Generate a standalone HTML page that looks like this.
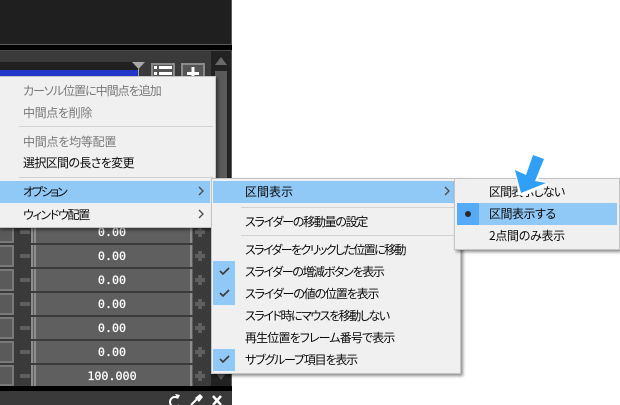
<!DOCTYPE html>
<html lang="ja"><head><meta charset="utf-8"><style>
html,body{margin:0;padding:0;width:620px;height:405px;overflow:hidden;background:#fff}
body{position:relative;font-family:"Liberation Sans","Noto Sans CJK JP",sans-serif}
div{position:absolute;box-sizing:border-box}
.t{font-family:"Noto Sans CJK JP",sans-serif;font-size:12px;line-height:18px;height:18px;margin-top:1px;white-space:nowrap;color:#0a0a0a;font-feature-settings:"palt"}
.g{color:#787878}
.sep{height:1px;background:#d2d2d2}
.hl{background:#90c8f6}
.menu{background:#f0f0f0;border:1px solid #c4c4c4;box-shadow:2px 2px 3px rgba(0,0,0,.45)}
.row{left:31px;width:162px;height:22px;background:#5f5f5f}
.row i{position:absolute;top:0;height:22px;width:1.5px;background:#8e8e8e}
.v{left:31px;width:162px;text-align:center;color:#fff;font:11.7px/23px "DejaVu Sans Mono",monospace;height:22px;-webkit-text-stroke:.25px #fff}
.box{left:-6px;width:20px;height:22px;background:#5a5a5a;border:2px solid #7a7a7a}
.m{left:20px;width:10px;height:4px;background:#5f5f5f;border-radius:1px}
.p1{left:195px;width:10px;height:4px;background:#5f5f5f}
.p2{left:198px;width:4px;height:10px;background:#5f5f5f}
</style></head><body>
<div style="left:0;top:0;width:232px;height:405px;background:#3a3a3a"></div>
<div style="left:0;top:0;width:231px;height:44px;background:#1f1f1f"></div>
<div style="left:231px;top:0;width:1px;height:405px;background:#5a5a5a"></div>
<div style="left:0;top:44px;width:232px;height:1px;background:#5c5c5c"></div>
<div style="left:0;top:45px;width:232px;height:5px;background:#000"></div>
<div style="left:0;top:50px;width:232px;height:1px;background:#4a4a4a"></div>
<div style="left:0;top:62px;width:138px;height:8px;background:#202020"></div>
<div style="left:0;top:70px;width:138px;height:8px;background:#2335c8"></div>
<div style="left:211px;top:51px;width:20px;height:335px;background:#222"></div>
<div style="left:215px;top:71px;width:12px;height:300px;background:#5a5a5a"></div>
<svg style="position:absolute;left:0;top:0" width="232" height="405">
<polygon points="132,62 145,62 138.5,69" fill="#a8a8a8"/>
<rect x="138" y="69" width="1" height="8" fill="#a8a8a8"/>
<polygon points="215,65 227,65 221,57" fill="#6a6a6a"/>
<polygon points="215,372 227,372 221,380" fill="#555"/>
<rect x="152" y="64" width="22" height="16" fill="#555" stroke="#8a8a8a" stroke-width="2"/>
<rect x="182" y="64" width="22" height="16" fill="#555" stroke="#8a8a8a" stroke-width="2"/>
<rect x="154" y="66" width="3" height="3" fill="#fff"/><rect x="159" y="66" width="13" height="3" fill="#fff"/>
<rect x="154" y="72" width="3" height="3" fill="#fff"/><rect x="159" y="72" width="13" height="3" fill="#fff"/>
<rect x="187" y="72" width="12" height="3" fill="#fff"/><rect x="191.500" y="67" width="3" height="10" fill="#fff"/>
</svg>
<div class="box" style="top:221px"></div><div class="box" style="top:245px"></div><div class="box" style="top:269px"></div><div class="box" style="top:293px"></div><div class="box" style="top:317px"></div><div class="box" style="top:341px"></div><div class="box" style="top:365px;height:21px"></div>
<div class="row" style="top:221px"><i style="left:0"></i><i style="left:3px"></i><i style="left:159px"></i></div>
<div class="row" style="top:245px"><i style="left:0"></i><i style="left:3px"></i><i style="left:159px"></i></div>
<div class="row" style="top:269px"><i style="left:0"></i><i style="left:3px"></i><i style="left:159px"></i></div>
<div class="row" style="top:293px"><i style="left:0"></i><i style="left:3px"></i><i style="left:159px"></i></div>
<div class="row" style="top:317px"><i style="left:0"></i><i style="left:3px"></i><i style="left:159px"></i></div>
<div class="row" style="top:341px"><i style="left:0"></i><i style="left:3px"></i><i style="left:159px"></i></div>
<div class="row" style="top:365px;height:21px"><i style="left:0"></i><i style="left:3px"></i><i style="left:159px"></i></div>
<div class="v" style="top:221px">0.00</div><div class="v" style="top:245px">0.00</div><div class="v" style="top:269px">0.00</div><div class="v" style="top:293px">0.00</div><div class="v" style="top:317px">0.00</div><div class="v" style="top:341px">0.00</div><div class="v" style="top:365px">100.000</div>
<div class="m" style="top:230px"></div><div class="m" style="top:254px"></div><div class="m" style="top:278px"></div><div class="m" style="top:302px"></div><div class="m" style="top:326px"></div><div class="m" style="top:350px"></div><div class="m" style="top:374px"></div>
<div class="p1" style="top:230px"></div><div class="p2" style="top:227px"></div>
<div class="p1" style="top:254px"></div><div class="p2" style="top:251px"></div>
<div class="p1" style="top:278px"></div><div class="p2" style="top:275px"></div>
<div class="p1" style="top:302px"></div><div class="p2" style="top:299px"></div>
<div class="p1" style="top:326px"></div><div class="p2" style="top:323px"></div>
<div class="p1" style="top:350px"></div><div class="p2" style="top:347px"></div>
<div class="p1" style="top:374px"></div><div class="p2" style="top:371px"></div>
<div style="left:0;top:391px;width:232px;height:14px;background:#3a3a3a"></div>
<div style="left:0;top:386px;width:232px;height:5px;background:#000"></div>
<svg style="position:absolute;left:0;top:0" width="232" height="405">
<path d="M178 398 A5 5 0 1 0 179 405" fill="none" stroke="#fff" stroke-width="2"/>
<path d="M175 394 l5 1 -2 4z" fill="#fff"/>
<path d="M191 405 L198 398" stroke="#fff" stroke-width="2"/>
<path d="M195 398 l5 -4 3 3 -4 5z" fill="#fff"/>
<path d="M213 396 L221 405 M221 396 L213 405" stroke="#fff" stroke-width="2.500"/>
</svg>

<!-- menu 1 -->
<div class="menu" style="left:-2px;top:76px;width:218px;height:152px"></div>
<div class="t g" style="left:23px;top:81px;letter-spacing:-1px">カーソル位置に中間点を追加</div>
<div class="t g" style="left:23px;top:103px;letter-spacing:-.35px">中間点を削除</div>
<div class="sep" style="left:19px;top:126px;width:194px"></div>
<div class="t g" style="left:23px;top:132px;letter-spacing:-.25px">中間点を均等配置</div>
<div class="t" style="left:23px;top:153px;letter-spacing:-.65px">選択区間の長さを変更</div>
<div class="sep" style="left:19px;top:177px;width:194px"></div>
<div class="hl" style="left:0;top:181px;width:210px;height:22px"></div>
<div class="t" style="left:23px;top:182px;letter-spacing:-2px">オプション</div>
<div class="t" style="left:23px;top:205px;letter-spacing:-1.3px">ウィンドウ配置</div>

<!-- menu 2 -->
<div class="menu" style="left:211px;top:178px;width:250px;height:196px"></div>
<div class="hl" style="left:213px;top:181px;width:246px;height:22px"></div>
<div class="t" style="left:245px;top:182px">区間表示</div>
<div class="sep" style="left:241px;top:207px;width:218px"></div>
<div class="t" style="left:245px;top:212px;letter-spacing:-1.25px">スライダーの移動量の設定</div>
<div class="sep" style="left:241px;top:235px;width:218px"></div>
<div class="t" style="left:245px;top:240px;letter-spacing:-1.6px">スライダーをクリックした位置に移動</div>
<div class="hl" style="left:213px;top:261px;width:22px;height:44px"></div>
<div class="hl" style="left:213px;top:349px;width:22px;height:22px"></div>
<div class="t" style="left:245px;top:262px;letter-spacing:-1.35px">スライダーの増減ボタンを表示</div>
<div class="t" style="left:245px;top:284px;letter-spacing:-1.15px">スライダーの値の位置を表示</div>
<div class="t" style="left:245px;top:306px;letter-spacing:-1.45px">スライド時にマウスを移動しない</div>
<div class="t" style="left:245px;top:328px;letter-spacing:-.85px">再生位置をフレーム番号で表示</div>
<div class="t" style="left:245px;top:350px;letter-spacing:-1.2px">サブグループ項目を表示</div>

<!-- menu 3 -->
<div class="menu" style="left:454px;top:178px;width:166px;height:72px"></div>
<div class="hl" style="left:457px;top:203px;width:160px;height:22px"></div>
<div style="left:457px;top:203px;width:22px;height:22px;background:#56abf6"></div>
<div style="left:465px;top:211px;width:6px;height:6px;border-radius:50%;background:#2a2a2a"></div>
<div class="t" style="left:489px;top:182px;letter-spacing:-.85px">区間表示しない</div>
<div class="t" style="left:489px;top:204px;letter-spacing:-.5px">区間表示する</div>
<div class="t" style="left:489px;top:226px;letter-spacing:-.3px">2点間のみ表示</div>

<svg style="position:absolute;left:0;top:0" width="620" height="405">
<g fill="none" stroke="#4a4a4a" stroke-width="1.300">
<path d="M199 187 l4 4 -4 4"/><path d="M199 210 l4 4 -4 4"/><path d="M445 187 l4 4 -4 4"/>
</g>
<g fill="none" stroke="#3a3a3a" stroke-width="1.600">
<path d="M220 271 l3 3 6 -6"/><path d="M220 293 l3 3 6 -6"/><path d="M220 359 l3 3 6 -6"/>
</g>
<polygon points="515,170 518,195 524,196 550,184 538,180 546,160 533,155" fill="#fff"/>
<polygon points="533,155 544,159 535,181 546,183 521,193 515,170 526,175" fill="#2fa0f5"/>
</svg>
</body></html>
